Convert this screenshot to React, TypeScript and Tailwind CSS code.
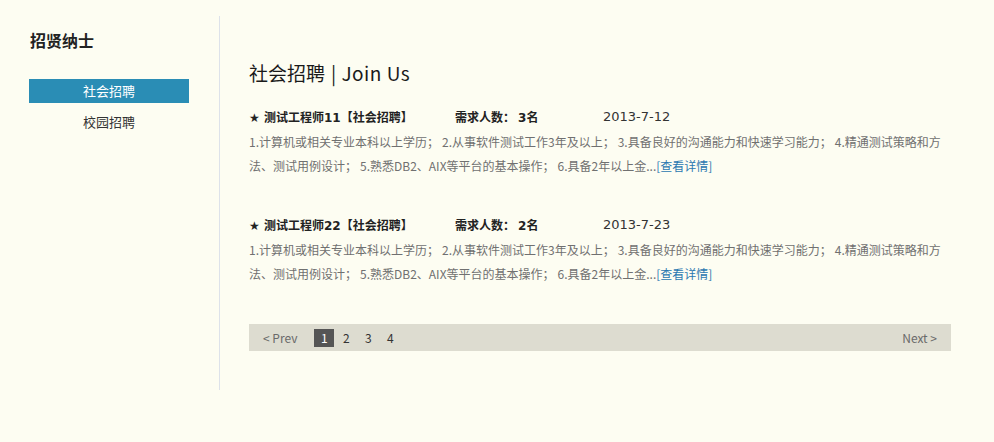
import React from "react";

const font = { fontFamily: '"Noto Sans CJK SC", "Noto Sans", sans-serif' };
const latinBold = { fontFamily: '"DejaVu Sans", "Noto Sans CJK SC", sans-serif' };

const jobs = [
  { name: "测试工程师", num: "11", count: "3", date: "2013-7-12" },
  { name: "测试工程师", num: "22", count: "2", date: "2013-7-23" },
];

function Semi() {
  return <span className="mr-[3px]">；</span>;
}

function Desc() {
  return (
    <div className="mt-[1px] text-[12px] leading-[24px] text-[#707070]">
      <div className="whitespace-nowrap h-[24px]">
        <span>1.计算机或相关专业本科以上学历</span>
        <Semi />
        <span>2.从事软件测试工作3年及以上</span>
        <Semi />
        <span>3.具备良好的沟通能力和快速学习能力</span>
        <Semi />
        <span>4.精通测试策略和方</span>
      </div>
      <div className="whitespace-nowrap h-[24px]">
        <span>法、测试用例设计</span>
        <Semi />
        <span>5.熟悉DB2、AIX等平台的基本操作</span>
        <Semi />
        <span>6.具备2年以上金...</span>
        <span className="text-[#2a78b0]">[查看详情]</span>
      </div>
    </div>
  );
}

export default function App() {
  return (
    <div className="w-[994px] h-[442px] bg-[#fdfdf2] flex" style={font}>
      <aside className="w-[219px] shrink-0 pl-[29px] pt-[30px]">
        <h2 className="text-[16px] leading-[20px] font-bold text-[#222] pl-[1px]">招贤纳士</h2>
        <ul className="mt-[29px] w-[160px] text-[13px]">
          <li className="h-[24px] leading-[24px] bg-[#2a8db5] text-white text-center">社会招聘</li>
          <li className="mt-[7px] h-[24px] leading-[24px] text-[#333] text-center">校园招聘</li>
        </ul>
      </aside>
      <main className="mt-[16px] h-[374px] border-l border-[#dde2ea] pl-[29px] pt-[45px] w-[733px]">
        <h1 className="h-[24px] text-[19px] leading-[24px] text-[#1a1a1a] flex items-baseline">
          <span>社会招聘</span>
          <span className="ml-[6px] tracking-[0.5px]">| Join Us</span>
        </h1>
        <div className="mt-[20px] w-[702px]">
          {jobs.map((j, i) => (
            <div key={i} className={i === 0 ? "" : "mt-[35px]"}>
              <div className="h-[24px] flex items-center text-[12px] leading-[24px] text-[#222]">
                <span className="w-[206px] font-bold whitespace-nowrap">
                  <span style={latinBold}>★ </span>
                  <span>{j.name}</span>
                  <span style={latinBold}>{j.num}</span>
                  <span>【社会招聘】</span>
                </span>
                <span className="w-[148px] font-bold whitespace-nowrap">
                  <span>需求人数</span>
                  <span className="mr-[3px]">：</span>
                  <span style={latinBold}>{j.count}</span>
                  <span>名</span>
                </span>
                <span className="text-[13px] text-[#333]" style={{ fontFamily: '"DejaVu Sans", sans-serif' }}>
                  {j.date}
                </span>
              </div>
              <Desc />
            </div>
          ))}
        </div>
        <nav className="mt-[38px] w-[702px] h-[27px] bg-[#dddcd0] flex items-center px-[14px] text-[12px] text-[#6a6a6a]">
          <span>&lt; Prev</span>
          <div className="ml-[17px] flex gap-[2px]">
            <span className="w-[20px] h-[18px] leading-[18px] text-center bg-[#555555] text-white">1</span>
            <span className="w-[20px] h-[18px] leading-[18px] text-center text-[#333]">2</span>
            <span className="w-[20px] h-[18px] leading-[18px] text-center text-[#333]">3</span>
            <span className="w-[20px] h-[18px] leading-[18px] text-center text-[#333]">4</span>
          </div>
          <span className="ml-auto">Next &gt;</span>
        </nav>
      </main>
    </div>
  );
}
